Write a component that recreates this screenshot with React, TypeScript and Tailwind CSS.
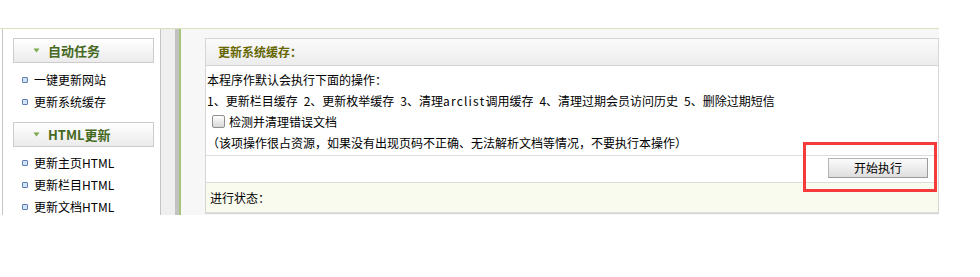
import React from "react";

function Arrow() {
  return (
    <svg width="7" height="5" viewBox="0 0 7 5" className="shrink-0">
      <path d="M0.5 0.5 L6.5 0.5 L3.5 4.5 Z" fill="#7aa84a" />
    </svg>
  );
}

function SideHeader({ title }: { title: string }) {
  return (
    <div className="shrink-0 ml-[10px] w-[141px] h-[25px] border border-[#cccccc] bg-gradient-to-b from-[#ffffff] to-[#ebebeb] flex items-center pl-[19px] gap-[8px]">
      <Arrow />
      <span className="text-[13px] font-bold text-[#45691f] leading-none">{title}</span>
    </div>
  );
}

function SideItem({ label }: { label: string }) {
  return (
    <div className="shrink-0 h-[22px] flex items-center pl-[19px] gap-[6px] text-[12px] text-black">
      <span className="w-[6px] h-[6px] border border-[#5f7fb2] bg-[#d2e2f8] rounded-[1px] shrink-0" />
      <span className="leading-none">{label}</span>
    </div>
  );
}

function Sp() {
  return <span className="inline-block w-[6px]" />;
}

export default function App() {
  return (
    <div className="relative w-[980px] h-[277px] bg-white font-['Noto_Sans_CJK_SC',sans-serif] text-[12px] text-black overflow-hidden">
      <div className="h-[28px]" />
      <div className="flex w-[939px] h-[187px] border-t border-[#d7e3bd] overflow-hidden">
        {/* sidebar */}
        <div className="shrink-0 ml-[2px] w-[159px] border-l border-r border-[#c4c4c4] bg-white pt-[9px] flex flex-col overflow-hidden">
          <SideHeader title="自动任务" />
          <div className="shrink-0 mt-[6px] flex flex-col">
            <SideItem label="一键更新网站" />
            <SideItem label="更新系统缓存" />
          </div>
          <div className="shrink-0 mt-[9px]">
            <SideHeader title="HTML更新" />
          </div>
          <div className="shrink-0 mt-[5px] flex flex-col">
            <SideItem label="更新主页HTML" />
            <SideItem label="更新栏目HTML" />
            <SideItem label="更新文档HTML" />
          </div>
        </div>
        {/* divider */}
        <div className="shrink-0 w-[14px] bg-[#efefef]" />
        <div className="shrink-0 w-[4px] bg-[#c2c2c2]" />
        <div className="shrink-0 w-[2px] bg-[#a9c27c]" />
        {/* main */}
        <div className="flex-1 bg-[#f7f7f7] pl-[24px] pt-[9px]">
          <div className="w-[734px] border border-[#d6d6d6] bg-white">
            <div className="h-[27px] bg-gradient-to-b from-[#fbfbfb] to-[#ececec] border-b border-[#d3d3d3] flex items-center pl-[12px]">
              <span className="font-bold text-[12px] text-[#666600] leading-none">更新系统缓存：</span>
            </div>
            <div className="pl-[1px] pt-[3px] pb-[2px] leading-[21px] border-b border-[#dddddd]">
              <div>本程序作默认会执行下面的操作：</div>
              <div>
                1、更新栏目缓存<Sp />2、更新枚举缓存<Sp />3、清理<span className="tracking-[1.2px]">arclist</span>调用缓存<Sp />4、清理过期会员访问历史<Sp />5、删除过期短信
              </div>
              <div className="flex items-center pl-[5px] gap-[4px]">
                <span className="w-[13px] h-[13px] border border-[#8e8e8e] rounded-[2px] bg-gradient-to-b from-[#ffffff] to-[#d8d8d8]" />
                <span>检测并清理错误文档</span>
              </div>
              <div>（该项操作很占资源，如果没有出现页码不正确、无法解析文档等情况，不要执行本操作）</div>
            </div>
            <div className="h-[27px] flex justify-end items-start pt-[2px] pr-[10px] border-b border-[#dddddd]">
              <button className="w-[100px] h-[20px] border border-[#b5b5b5] border-r-[#9a9a9a] border-b-[#9a9a9a] bg-gradient-to-b from-[#fbfbfb] to-[#dedede] text-[12px] text-black leading-none flex items-center justify-center">
                开始执行
              </button>
            </div>
            <div className="h-[30px] bg-[#fafbef] flex items-center pl-[4px] border-b border-[#dddddd]">
              进行状态：
            </div>
          </div>
        </div>
      </div>
      <div className="absolute left-[803px] top-[142px] w-[134px] h-[50px] border-[3px] border-[#f43a3a]" />
    </div>
  );
}
